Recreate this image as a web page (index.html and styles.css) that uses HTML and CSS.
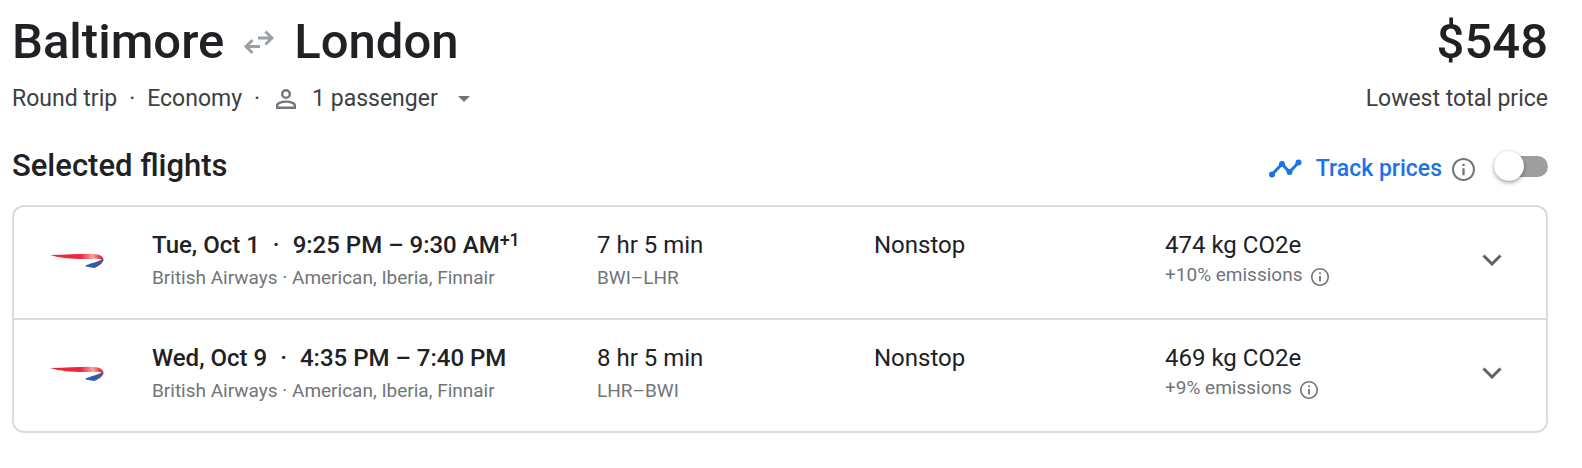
FILE: index.html
```html
<!DOCTYPE html>
<html lang="en">
<head>
<meta charset="utf-8">
<meta name="viewport" content="width=device-width, initial-scale=1">
<title>Baltimore to London</title>
<link rel="stylesheet" href="styles.css">
</head>
<body>
<svg class="defs" aria-hidden="true">
  <defs>
    <linearGradient id="ribbon-red" x1="0" x2="1" y1="0" y2="0">
      <stop offset="0" stop-color="#e8283c"/>
      <stop offset=".58" stop-color="#ec2840"/>
      <stop offset=".8" stop-color="#f7a79f"/>
      <stop offset=".92" stop-color="#ee3a48"/>
      <stop offset="1" stop-color="#d92a45"/>
    </linearGradient>
    <linearGradient id="ribbon-blue" x1="0" x2="1" y1="0" y2="0">
      <stop offset="0" stop-color="#1468b4"/>
      <stop offset="1" stop-color="#54508e"/>
    </linearGradient>
    <symbol id="airline" viewBox="0 -1 52 16">
      <path fill="url(#ribbon-blue)" d="M50.800 5C52.400 8.500 49 11.300 42.500 14.300L34 12.800C34.300 11.500 36.500 11 40 9.700C45 8 49 7 50.800 5Z"/>
      <path fill="url(#ribbon-red)" d="M0 1.800C14 1 27 .5 40 .4C48 .4 52.200 3.500 51.500 7.200C49.500 5.200 45.500 5.200 40 5.500C27 6 12 5.500 0 1.800Z"/>
    </symbol>
    <symbol id="info" viewBox="2 2 20 20">
      <path fill="currentColor" d="M11 7h2v2h-2zm0 4h2v6h-2zm1-9C6.480 2 2 6.480 2 12s4.480 10 10 10 10-4.480 10-10S17.520 2 12 2zm0 18.200c-4.520 0-8.200-3.680-8.200-8.200S7.480 3.800 12 3.800s8.200 3.680 8.200 8.200-3.680 8.200-8.200 8.200z"/>
    </symbol>
    <symbol id="chevron" viewBox="0 0 20 12">
      <path fill="none" stroke="currentColor" stroke-width="3" d="M1.500 1.500L10 10L18.500 1.500"/>
    </symbol>
  </defs>
</svg>
<main class="page">
  <header class="trip">
    <div class="trip-row">
      <h1 class="title">Baltimore
        <svg class="swap" viewBox="0 0 30 24" role="img" aria-label="to and from"><path fill="none" stroke="#9aa0a6" stroke-width="3" d="M14 8H28M21.500 1.500L28 8L21.500 14.500M16 16.500H2M8.500 10L2 16.500L8.500 23"/></svg>
        London</h1>
      <div class="price">$548</div>
    </div>
    <div class="trip-row details">
      <div class="facts">
        <span>Round trip</span><span class="dot">·</span><span>Economy</span><span class="dot">·</span>
        <button class="passengers" type="button">
          <svg class="person" viewBox="0 0 20 20" aria-hidden="true"><g fill="none" stroke="currentColor" stroke-width="2.400"><circle cx="10" cy="5" r="3.800"/><path d="M1.200 18.800V16.500C1.200 14.200 6 12.600 10 12.600S18.800 14.200 18.800 16.500V18.800Z"/></g></svg>
          <span>1 passenger</span>
          <svg class="caret" viewBox="0 0 12 6" aria-hidden="true"><path fill="currentColor" d="M0 0H12L6 6Z"/></svg>
        </button>
      </div>
      <div>Lowest total price</div>
    </div>
  </header>

  <section>
    <div class="section-head">
      <h2 class="section-title">Selected flights</h2>
      <div class="track">
        <div class="track-text">
          <svg class="trend" viewBox="0 0 34 20" aria-hidden="true"><path fill="none" stroke="#1a73e8" stroke-width="3" d="M4 15.500L14 5L21.500 13L30.500 3.500"/><g fill="#1a73e8"><circle cx="4" cy="15.500" r="3"/><circle cx="14" cy="5" r="3"/><circle cx="21.500" cy="13" r="3"/><circle cx="30.500" cy="3.500" r="3"/></g></svg>
          <label class="track-label" for="track">Track prices</label>
          <button class="info-button" type="button" aria-label="About price tracking"><svg class="info-large"><use href="#info"/></svg></button>
        </div>
        <input class="switch" id="track" type="checkbox" role="switch">
      </div>
    </div>

    <ul class="flights">
      <li class="flight">
        <svg class="logo" role="img" aria-label="British Airways"><use href="#airline"/></svg>
        <div>
          <div class="primary strong"><span>Tue, Oct 1</span><span class="dot">·</span><span>9:25 PM – 9:30 AM<sup class="plus">+1</sup></span></div>
          <div class="secondary">British Airways · American, Iberia, Finnair</div>
        </div>
        <div>
          <div class="primary">7 hr 5 min</div>
          <div class="secondary">BWI–LHR</div>
        </div>
        <div class="primary">Nonstop</div>
        <div>
          <div class="primary">474 kg CO2e</div>
          <div class="secondary emissions">+10% emissions <button class="info-button" type="button" aria-label="About emissions"><svg class="info-small"><use href="#info"/></svg></button></div>
        </div>
        <button class="expand" type="button" aria-label="Show flight details"><svg class="chevron"><use href="#chevron"/></svg></button>
      </li>
      <li class="flight">
        <svg class="logo" role="img" aria-label="British Airways"><use href="#airline"/></svg>
        <div>
          <div class="primary strong"><span>Wed, Oct 9</span><span class="dot">·</span><span>4:35 PM – 7:40 PM</span></div>
          <div class="secondary">British Airways · American, Iberia, Finnair</div>
        </div>
        <div>
          <div class="primary">8 hr 5 min</div>
          <div class="secondary">LHR–BWI</div>
        </div>
        <div class="primary">Nonstop</div>
        <div>
          <div class="primary">469 kg CO2e</div>
          <div class="secondary emissions">+9% emissions <button class="info-button" type="button" aria-label="About emissions"><svg class="info-small"><use href="#info"/></svg></button></div>
        </div>
        <button class="expand" type="button" aria-label="Show flight details"><svg class="chevron"><use href="#chevron"/></svg></button>
      </li>
    </ul>
  </section>
</main>
</body>
</html>
```

FILE: styles.css
```css
* {
  box-sizing: border-box;
}

body {
  margin: 0;
  background: #fff;
  color: #202124;
  font-family: Roboto, "Liberation Sans", sans-serif;
}

button {
  display: flex;
  align-items: center;
  justify-content: center;
  padding: 0;
  border: 0;
  background: none;
  color: inherit;
  font: inherit;
  cursor: pointer;
}

svg {
  display: block;
  flex: none;
}

.defs {
  position: absolute;
  width: 0;
  height: 0;
}

.page {
  padding: 14px 34px 34px 12px;
}

.trip {
  display: grid;
  gap: 15px;
}

.trip-row {
  display: flex;
  align-items: center;
  justify-content: space-between;
}

.title,
.price {
  margin: 0;
  font-size: 49px;
  font-weight: 500;
  line-height: 56px;
}

.title {
  display: flex;
  align-items: center;
  gap: 20px;
}

.swap {
  width: 30px;
  height: 24px;
}

.details {
  color: #3c4043;
  font-size: 23px;
  line-height: 28px;
}

.facts {
  display: flex;
  align-items: center;
}

.dot {
  padding: 0 12px;
}

.passengers {
  padding-left: 4px;
}

.person {
  width: 20px;
  height: 20px;
  margin-right: 16px;
  color: #70757a;
}

.caret {
  width: 12px;
  height: 6px;
  margin-left: 20px;
  color: #70757a;
}

.section-head {
  display: flex;
  align-items: center;
  justify-content: space-between;
  margin: 35px 0 21px;
}

.section-title {
  margin: 0;
  font-size: 31px;
  font-weight: 500;
  line-height: 36px;
}

.track,
.track-text {
  display: flex;
  align-items: center;
}

.track-text {
  padding-top: 6px;
}

.trend {
  width: 34px;
  height: 20px;
  margin-right: 14px;
}

.track-label {
  color: #1a73e8;
  font-size: 23px;
  font-weight: 500;
  line-height: 28px;
}

.track .info-button {
  margin: 0 23px 0 10px;
}

.info-button {
  color: #70757a;
}

.info-large {
  width: 23px;
  height: 23px;
}

.info-small {
  width: 18px;
  height: 18px;
}

.switch {
  display: flex;
  align-items: center;
  width: 50px;
  height: 21px;
  margin: 0;
  border-radius: 11px;
  background: #9e9e9e;
  appearance: none;
  cursor: pointer;
}

.switch::before {
  content: "";
  flex: none;
  width: 30px;
  height: 30px;
  margin-left: -4px;
  border-radius: 50%;
  background: #fff;
  box-shadow: 0 2px 4px rgba(0, 0, 0, .35), 0 0 2px rgba(0, 0, 0, .1);
}

.switch:checked {
  background: #8ab4f8;
}

.switch:checked::before {
  margin-left: 24px;
  background: #1a73e8;
}

.flights {
  margin: 0;
  padding: 0;
  border: 2px solid #dadce0;
  border-radius: 12px;
  list-style: none;
}

.flight {
  display: grid;
  grid-template-columns: 102px 445fr 277fr 291fr 303fr 48px;
  padding: 22px 30px 27px 36px;
}

.flight + .flight {
  border-top: 2px solid #dadce0;
}

.logo {
  width: 54px;
  height: 17px;
  align-self: center;
}

.primary {
  font-size: 24px;
  line-height: 32px;
}

.strong {
  font-weight: 500;
}

.strong .dot {
  padding: 0 13px;
}

.plus {
  font-size: 18px;
  line-height: 0;
  vertical-align: 7px;
}

.secondary {
  margin-top: 4px;
  color: #70757a;
  font-size: 19px;
  line-height: 26px;
}

.emissions {
  display: flex;
  align-items: center;
  gap: 8px;
  margin-top: 1px;
}

.emissions .info-button {
  padding-top: 3px;
}

.expand {
  width: 48px;
  height: 48px;
  align-self: center;
  color: #5f6368;
}

.chevron {
  width: 20px;
  height: 12px;
}
```
